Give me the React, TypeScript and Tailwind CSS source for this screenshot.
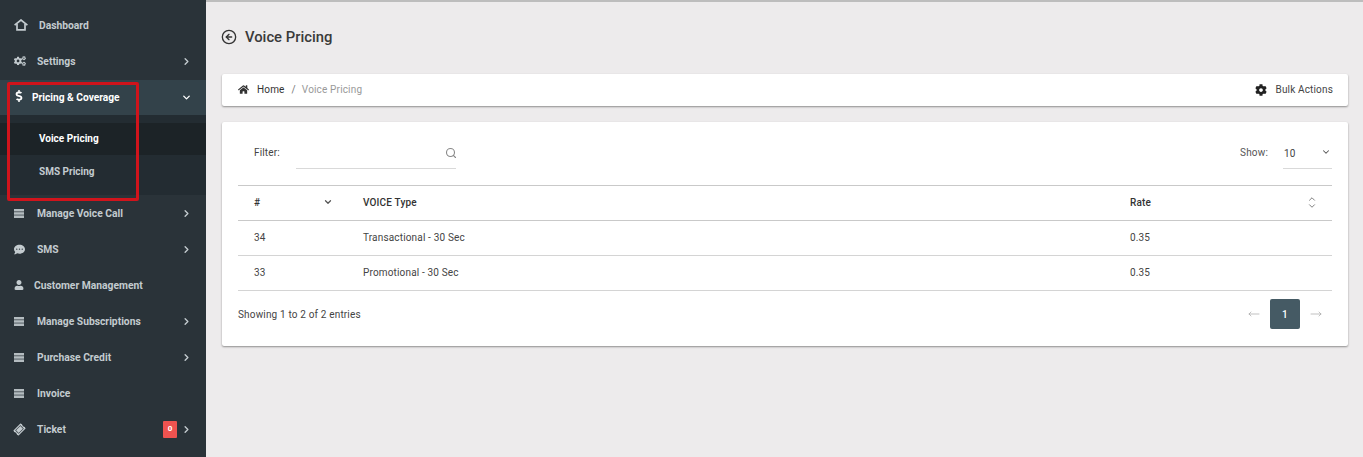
import React from "react";
import { FaCogs, FaDollarSign, FaCommentDots, FaUser, FaTicketAlt, FaCog, FaHome } from "react-icons/fa";
import { ChevronDown, ChevronRight, ChevronUp, CircleArrowLeft, Search, MoveLeft, MoveRight } from "lucide-react";

const HomeOutline = () => (
  <svg width="14" height="12" viewBox="0 0 14 12" fill="none" stroke="#c3cbcf" strokeWidth="1.7">
    <path d="M0.6 6.2 L7 1 L13.4 6.2" />
    <path d="M3 5 V10.8 H11 V5" />
  </svg>
);

const Bars = () => (
  <svg width="10" height="9" viewBox="0 0 10 9" fill="#b4bcc0">
    <rect x="0" y="0" width="10" height="2.5" />
    <rect x="0" y="3.2" width="10" height="2.5" />
    <rect x="0" y="6.4" width="10" height="2.6" />
  </svg>
);

type Row = { label: string; icon: React.ReactNode; pad: string; arrow?: boolean; badge?: boolean };

const Item = ({ label, icon, pad, arrow, badge }: Row) => (
  <div className="h-9 flex items-center pl-[14px] pr-[14px] text-[#c3cbcf]">
    <span className={`flex items-center justify-start ${pad}`}>{icon}</span>
    <span className="text-[10.3px] font-bold leading-none pt-[2px]">{label}</span>
    <span className="flex-1" />
    {badge && (
      <span className="w-[14px] h-[17px] mr-[4px] bg-[#ef5350] rounded-[1px] text-white text-[8px] font-bold flex items-center justify-center">0</span>
    )}
    {arrow && <ChevronRight size={11} strokeWidth={3} className="text-[#c3cbcf]" />}
  </div>
);

export default function App() {
  return (
    <div className="relative w-[1363px] h-[457px] overflow-hidden flex bg-[#edebec] font-['Roboto',sans-serif]">
      <aside className="w-[206px] h-full shrink-0 bg-[#2a3339] pt-[7px]">
        <Item label="Dashboard" pad="w-[25px]" icon={<HomeOutline />} />
        <Item label="Settings" pad="w-[23px]" icon={<FaCogs size={12} />} arrow />
        <div className="mt-[1px] h-[35px] bg-[#33424a] flex items-center pl-[14px] pr-[14px] text-white">
          <span className="w-[18px] flex items-center -mt-[3px] -ml-[1px] mr-[1px]"><FaDollarSign size={12} /></span>
          <span className="text-[10.2px] font-bold leading-none pt-[2px]">Pricing &amp; Coverage</span>
          <span className="flex-1" />
          <ChevronDown size={11} strokeWidth={3} />
        </div>
        <div className="h-[80px] pt-[8px] bg-[#232c32]">
          <div className="h-[32px] pb-[1px] bg-[#1c2327] flex items-center pl-[39px] text-white text-[10px] font-bold">Voice Pricing</div>
          <div className="h-[34px] pb-[2px] flex items-center pl-[39px] text-[#c3cbcf] text-[10px] font-bold">SMS Pricing</div>
        </div>
        <Item label="Manage Voice Call" pad="w-[23px]" icon={<Bars />} arrow />
        <Item label="SMS" pad="w-[23px]" icon={<FaCommentDots size={11} />} arrow />
        <Item label="Customer Management" pad="w-[20px]" icon={<FaUser size={10} />} />
        <Item label="Manage Subscriptions" pad="w-[23px]" icon={<Bars />} arrow />
        <Item label="Purchase Credit" pad="w-[23px]" icon={<Bars />} arrow />
        <Item label="Invoice" pad="w-[23px]" icon={<Bars />} />
        <Item label="Ticket" pad="w-[23px]" icon={<FaTicketAlt size={11} className="-rotate-45" />} arrow badge />
      </aside>

      <main className="flex-1 min-w-0 h-full border-t-2 border-[#bdbdbd] pl-4 pr-[15px]">
        <div className="flex items-center h-[72px] pb-[2px] -ml-[1px]">
          <CircleArrowLeft size={16} strokeWidth={2} className="text-[#333]" />
          <h1 className="ml-[8px] text-[14.8px] font-medium leading-none text-[#3a3a3a]">Voice Pricing</h1>
        </div>

        <div className="h-[32px] pb-[1px] bg-white rounded-[2px] shadow-[0_1px_2px_rgba(0,0,0,0.4)] flex items-center pl-4 pr-[15px] text-[10px] tracking-[0.16px]">
          <FaHome size={11} className="text-[#333]" />
          <span className="ml-2 text-[#333]">Home</span>
          <span className="mx-[7px] text-[#777]">/</span>
          <span className="-ml-[1px] text-[#999]">Voice Pricing</span>
          <span className="flex-1" />
          <FaCog size={12} className="text-[#222]" />
          <span className="ml-[9px] text-[#444]">Bulk Actions</span>
        </div>

        <section className="mt-4 h-[224px] bg-white rounded-[2px] shadow-[0_1px_2px_rgba(0,0,0,0.4)] px-4 text-[10px] text-[#444] tracking-[0.16px]">
          <div className="h-[63px] flex items-start">
            <span className="ml-4 mt-[23px]">Filter:</span>
            <div className="ml-[16px] mt-[16px] w-[160px] h-[31px] border-b border-[#d9d9d9] flex items-center justify-end">
              <Search size={12} strokeWidth={2.2} className="text-[#888] translate-x-[1px]" />
            </div>
            <span className="flex-1" />
            <span className="mt-[23px] text-[#555]">Show:</span>
            <div className="ml-[15px] mt-[16px] w-[49px] h-[31px] border-b border-[#d9d9d9] flex items-center justify-between pl-[1px] pr-[1px]">
              <span className="mt-[1px]">10</span>
              <ChevronDown size={10} strokeWidth={2.5} className="text-[#555] -mt-[2px]" />
            </div>
          </div>

          <div className="h-[36px] pb-[1px] border-t border-b border-[#c9c9c9] flex items-center font-medium text-[#333]">
            <span className="w-[85px] pl-4">#</span>
            <ChevronDown size={10} strokeWidth={3} className="text-[#555] -mt-[2px]" />
            <span className="ml-[30px] w-[767px]">VOICE Type</span>
            <span>Rate</span>
            <span className="flex-1" />
            <span className="mr-[15px] flex flex-col items-center text-[#666]">
              <ChevronUp size={10} strokeWidth={2} className="-mb-[3px]" />
              <ChevronDown size={10} strokeWidth={2} />
            </span>
          </div>
          {[["34", "Transactional - 30 Sec"], ["33", "Promotional - 30 Sec"]].map(([n, t]) => (
            <div key={n} className="h-[35px] pb-[1px] border-b border-[#d4d4d4] flex items-center">
              <span className="w-[125px] pl-4">{n}</span>
              <span className="w-[767px]">{t}</span>
              <span>0.35</span>
            </div>
          ))}
          <div className="h-[46px] flex items-center">
            <span>Showing 1 to 2 of 2 entries</span>
            <span className="flex-1" />
            <MoveLeft size={12} strokeWidth={1.2} className="text-[#999]" />
            <span className="mx-[10px] w-[30px] h-[30px] bg-[#455a64] rounded-[2px] text-white font-medium flex items-center justify-center">1</span>
            <MoveRight size={12} strokeWidth={1.2} className="text-[#999] mr-[10px]" />
          </div>
        </section>
      </main>

      <div className="absolute left-[7px] top-[82px] w-[132px] h-[119px] border-[3px] border-[#d0141c] rounded-[2px] pointer-events-none" />
    </div>
  );
}
